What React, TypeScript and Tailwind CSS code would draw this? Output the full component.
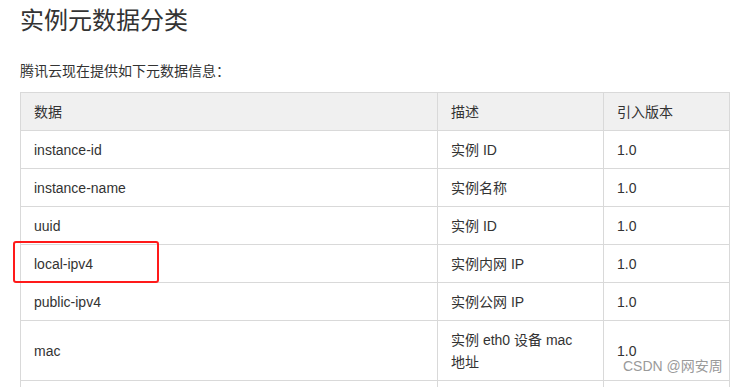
import React from 'react';

interface Row {
  key: string;
  desc: string;
  version: string;
}

const rows: Row[] = [
  { key: 'instance-id', desc: '实例 ID', version: '1.0' },
  { key: 'instance-name', desc: '实例名称', version: '1.0' },
  { key: 'uuid', desc: '实例 ID', version: '1.0' },
  { key: 'local-ipv4', desc: '实例内网 IP', version: '1.0' },
  { key: 'public-ipv4', desc: '实例公网 IP', version: '1.0' },
  { key: 'mac', desc: '实例 eth0 设备 mac 地址', version: '1.0' },
];

const font = { fontFamily: '"Liberation Sans", "Noto Sans CJK SC", sans-serif' };

export default function App() {
  return (
    <div className="relative h-[387px] w-[736px] overflow-hidden bg-white text-[#333]" style={font}>
      <div className="pl-5 pt-[5px]">
        <h1 className="text-[24px] leading-[32px] font-normal text-[#333]">实例元数据分类</h1>
        <p className="mt-[23px] text-[14px] leading-[22px]">腾讯云现在提供如下元数据信息：</p>

        <table className="mt-[10px] w-[709px] table-fixed border-collapse text-[14px] leading-[22px]">
          <colgroup>
            <col className="w-[417px]" />
            <col className="w-[166px]" />
            <col className="w-[126px]" />
          </colgroup>
          <thead>
            <tr className="bg-[#f0f0f0]">
              <th className="border border-[#d9d9d9] px-[13px] pt-[8px] pb-[7px] text-left font-normal">数据</th>
              <th className="border border-[#d9d9d9] px-[13px] pt-[8px] pb-[7px] text-left font-normal">描述</th>
              <th className="border border-[#d9d9d9] px-[13px] pt-[8px] pb-[7px] text-left font-normal">引入版本</th>
            </tr>
          </thead>
          <tbody>
            {rows.map((r, i) => (
              <tr key={i}>
                <td className="border border-[#d9d9d9] px-[13px] pt-[8px] pb-[7px] align-middle">{r.key}</td>
                <td className="border border-[#d9d9d9] px-[13px] pt-[8px] pb-[7px] align-middle">{r.desc}</td>
                <td className="border border-[#d9d9d9] px-[13px] pt-[8px] pb-[7px] align-middle">{r.version}</td>
              </tr>
            ))}
            {/* next row, only its top border shows */}
            <tr>
              <td className="h-[37px] border border-[#d9d9d9]" />
              <td className="h-[37px] border border-[#d9d9d9]" />
              <td className="h-[37px] border border-[#d9d9d9]" />
            </tr>
          </tbody>
        </table>
      </div>

      {/* red highlight around local-ipv4 */}
      <div className="absolute left-[13px] top-[241px] h-[42px] w-[146px] rounded-[3px] border-2 border-[#ff1a1a]" />

      {/* watermark */}
      <div className="absolute left-[623px] top-[356px] text-[14px] leading-[20px] text-[#9a9a9a]">
        CSDN @网安周
      </div>
    </div>
  );
}
